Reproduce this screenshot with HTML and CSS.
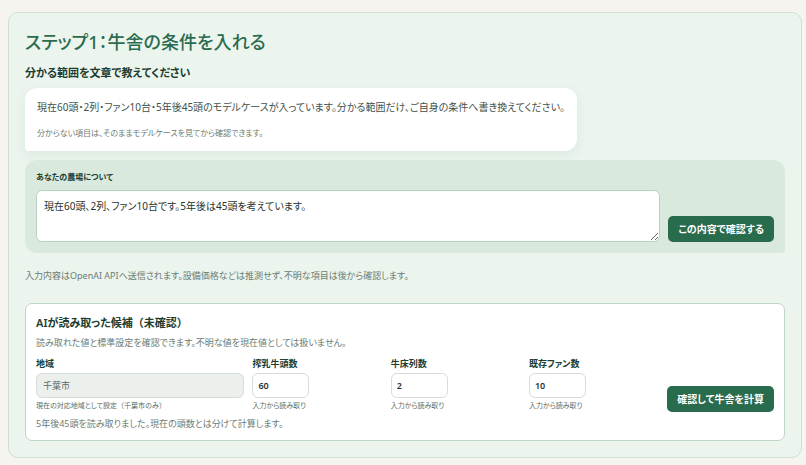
FILE: index.html
```html
<!DOCTYPE html>
<html lang="ja">

<head>
    <meta charset="utf-8">
    <meta name="viewport" content="width=device-width,initial-scale=1.0">
    <title>牛舎の条件を入れる</title>
    <link rel="stylesheet" href="styles.css">
</head>

<body>
    <main class="step">
        <h1>ステップ1：牛舎の条件を入れる</h1>
        <h2>分かる範囲を文章で教えてください</h2>

        <div class="message">
            <p class="message-main">現在60頭・2列・ファン10台・5年後45頭のモデルケースが入っています。分かる範囲だけ、ご自身の条件へ書き換えてください。</p>
            <p class="message-sub">分からない項目は、そのままモデルケースを見てから確認できます。</p>
        </div>

        <form class="ask">
            <div class="ask-field">
                <label for="farm">あなたの農場について</label>
                <textarea id="farm">現在60頭、2列、ファン10台です。5年後は45頭を考えています。</textarea>
            </div>
            <button type="button">この内容で確認する</button>
        </form>

        <p class="notice">入力内容はOpenAI APIへ送信されます。設備価格などは推測せず、不明な項目は後から確認します。</p>

        <section class="result">
            <h3>AIが読み取った候補<span class="full">（未確認）</span></h3>
            <p class="text">読み取れた値と標準設定を確認できます。不明な値を現在値としては扱いません。</p>
            <form class="fields">
                <div class="field">
                    <label for="area">地域</label>
                    <input type="text" class="area" id="area" value="千葉市" readonly>
                    <small>現在の対応地域として設定<span class="full">（千葉市のみ）</span></small>
                </div>
                <div class="field">
                    <label for="cows">搾乳牛頭数</label>
                    <input type="text" inputmode="numeric" class="number" id="cows" value="60">
                    <small>入力から読み取り</small>
                </div>
                <div class="field">
                    <label for="rows">牛床列数</label>
                    <input type="text" inputmode="numeric" class="number" id="rows" value="2">
                    <small>入力から読み取り</small>
                </div>
                <div class="field">
                    <label for="fans">既存ファン数</label>
                    <input type="text" inputmode="numeric" class="number" id="fans" value="10">
                    <small>入力から読み取り</small>
                </div>
                <button type="button">確認して牛舎を計算</button>
            </form>
            <p class="text">5年後45頭を読み取りました。現在の頭数とは分けて計算します。</p>
        </section>
    </main>
</body>

</html>
```
FILE: styles.css
```css
* {
    box-sizing: border-box;
}

body {
    margin: 0;
    padding: 12px 4px 7px 8px;
    background-color: #f5f4ef;
    color: #203c31;
    font-family: "Noto Sans", "Noto Sans CJK JP", sans-serif;
    font-feature-settings: "palt";
    font-size: 9px;
    line-height: 14px;
}

h1,
h2,
h3,
p {
    margin: 0;
}

/* full-width brackets */
.full {
    font-feature-settings: normal;
}

.step {
    padding: 16px;
    border: 1px solid #cfe1d6;
    border-radius: 10px;
    background-color: #ebf5ee;
}

h1 {
    color: #2b6b50;
    font-size: 18px;
    font-weight: 500;
    line-height: 26px;
}

h2 {
    margin-top: 10px;
    font-size: 11px;
    font-weight: 600;
    line-height: 16px;
}

.message {
    width: fit-content;
    margin-top: 7px;
    padding: 11px 12px;
    border-radius: 12px 12px 12px 3px;
    background-color: #fff;
    box-shadow: 0 4px 12px rgba(32, 80, 56, 0.08);
    color: #3f5249;
}

.message-main {
    font-size: 10px;
    line-height: 16px;
}

.message-sub {
    margin-top: 11px;
    color: #6c7c74;
    font-size: 8px;
}

.ask {
    display: flex;
    align-items: flex-end;
    gap: 8px;
    margin-top: 9px;
    padding: 10px 11px 11px;
    border-radius: 12px 12px 3px 12px;
    background-color: #d9e9de;
}

.ask-field {
    flex: 1;
    display: flex;
    flex-direction: column;
    gap: 6px;
}

label {
    font-weight: 600;
}

.ask label {
    font-size: 8px;
}

textarea,
input {
    border: 1px solid #d5ddd8;
    border-radius: 6px;
    background-color: #fff;
    color: #26332d;
    font: inherit;
    font-feature-settings: inherit;
}

textarea {
    display: block;
    width: 100%;
    height: 52px;
    padding: 7px;
    border-color: #b9d2c3;
    font-size: 10px;
    line-height: 16px;
    resize: vertical;
}

button {
    height: 26px;
    padding: 0 10px;
    border: 0;
    border-radius: 5px;
    background-color: #286b4d;
    color: #fff;
    font: inherit;
    font-feature-settings: inherit;
    font-size: 10px;
    font-weight: 600;
    white-space: nowrap;
}

.notice {
    margin-top: 16px;
    color: #6c7c74;
}

.result {
    margin-top: 20px;
    padding: 11px 10px 9px;
    border: 1px solid #bfd5c8;
    border-radius: 7px;
    background-color: #fff;
}

h3 {
    font-size: 11px;
    font-weight: 600;
    line-height: 16px;
}

.text {
    margin-top: 5px;
    color: #6c7c74;
}

.fields {
    display: grid;
    grid-template-columns: 8fr 5fr 5fr 5fr auto;
    align-items: end;
    gap: 8px;
    margin-top: 7px;
}

.field {
    display: flex;
    flex-direction: column;
    gap: 2px;
}

.field input {
    height: 25px;
    padding: 0 6px;
}

.field .number {
    width: 57px;
    padding: 0 5px;
    font-weight: 600;
}

.field .area {
    background-color: #ebf0ec;
    color: #5b6c63;
}

small {
    color: #5b6c63;
    font-size: 7px;
    line-height: 12px;
}
```
